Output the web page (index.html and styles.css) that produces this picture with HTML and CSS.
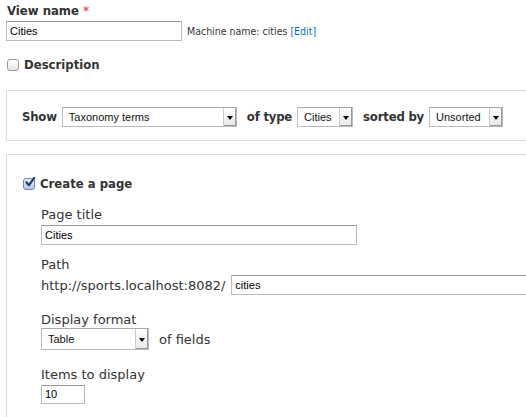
FILE: index.html
```html
<!DOCTYPE html>
<html>
<head>
<meta charset="utf-8">
<link rel="stylesheet" href="styles.css">
</head>
<body>
<div class="page">
  <div class="item">
    <label class="lbl">View name <span class="req">*</span></label>
    <div class="row">
      <input class="txt name" type="text" value="Cities">
      <span class="machine">Machine name: cities <a href="#">[Edit]</a></span>
    </div>
  </div>
  <div class="check desc">
    <span class="cb"></span>
    <span class="cblabel">Description</span>
  </div>

  <div class="box showbox">
    <span class="blabel">Show</span>
    <div class="sel w-tax"><span class="val">Taxonomy terms</span><span class="arr"></span></div>
    <span class="blabel">of type</span>
    <div class="sel w-city"><span class="val">Cities</span><span class="arr"></span></div>
    <span class="blabel">sorted by</span>
    <div class="sel w-sort"><span class="val">Unsorted</span><span class="arr"></span></div>
  </div>

  <div class="box pagebox">
    <div class="check create">
      <span class="cb checked"><svg viewBox="0 0 12 12" width="12" height="12"><path d="M2.3 6.2 L5 9.2 L10.2 1.8" fill="none" stroke="#1d3f7a" stroke-width="2.2" stroke-linecap="round" stroke-linejoin="round"/></svg></span>
      <span class="cblabel">Create a page</span>
    </div>
    <div class="sub">
      <div class="field f-title">
        <div class="flabel">Page title</div>
        <input class="txt ptitle" type="text" value="Cities">
      </div>
      <div class="field f-path">
        <div class="flabel">Path</div>
        <div class="row">
          <span class="prefix">http://sports.localhost:8082/</span>
          <input class="txt path" type="text" value="cities">
        </div>
      </div>
      <div class="field f-format">
        <div class="flabel">Display format</div>
        <div class="row">
          <div class="sel w-table tall"><span class="val">Table</span><span class="arr"></span></div>
          <span class="prefix offields">of fields</span>
        </div>
      </div>
      <div class="field f-items">
        <div class="flabel">Items to display</div>
        <input class="txt items" type="text" value="10">
      </div>
    </div>
  </div>
</div>
</body>
</html>
```

FILE: styles.css
```css
html, body { margin: 0; padding: 0; background: #fff; }
body { font-family: "DejaVu Sans", Verdana, sans-serif; color: #333; overflow: hidden; }
.page { padding: 3px 0 0 6px; }

.lbl, .cblabel, .blabel { font-family: "DejaVu Sans Condensed", "DejaVu Sans", sans-serif; font-weight: bold; font-size: 13px; color: #333; }
.lbl { display: block; line-height: 16px; margin-left: 1px; }
.req { color: #e55; }
.row { display: flex; align-items: center; }
.item .row { margin-top: 2px; }

.txt {
  box-sizing: border-box; font-family: "Liberation Sans", Arial, sans-serif; font-size: 11px;
  color: #000; border: 1px solid #bbb; border-top-color: #999; padding: 0 3px; height: 20px;
  background: #fff; outline: none; margin: 0;
}
.name { width: 176px; }
.machine { font-family: "DejaVu Sans Condensed", "DejaVu Sans", sans-serif; font-size: 10.5px; margin-left: 5px; color: #333; }
.machine a { color: #0074bd; text-decoration: none; }

.check { display: flex; align-items: center; }
.desc { margin-top: 16px; margin-left: 1px; }
.cb {
  box-sizing: border-box; width: 12px; height: 12px; border: 1px solid #999; border-radius: 3px;
  background: linear-gradient(#fff, #e6e6e6); display: inline-flex; align-items: center; justify-content: center;
}
.cb.checked { border-color: #6c86b8; background: linear-gradient(#e8eef9, #b9c8e6); overflow: visible; }
.cb svg { margin-top: -3px; margin-left: 1px; overflow: visible; }
.cblabel { margin-left: 5px; }

.box { border: 1px solid #ddd; border-right: none; margin-right: -10px; }
.showbox { margin-top: 18px; height: 51px; display: flex; align-items: center; padding: 2px 0 0 15px; box-sizing: border-box; }
.blabel { margin-right: 5px; letter-spacing: -0.2px; }
.sel + .blabel { margin-left: 10px; }

.sel {
  box-sizing: border-box; height: 20px; border: 1px solid #bbb; border-top-color: #aaa; background: #fff;
  display: flex; align-items: center; justify-content: space-between; padding-left: 6px;
  font-family: "Liberation Sans", Arial, sans-serif; font-size: 11px; color: #111;
}
.sel .arr {
  width: 12px; height: 18px; border-left: 1px solid #ccc; background: linear-gradient(#fff, #e8e8e8);
  position: relative; box-shadow: inset -1px -1px 0 #999;
}
.sel .arr::after {
  content: ""; position: absolute; left: 3px; top: 8px;
  border-left: 3px solid transparent; border-right: 3px solid transparent; border-top: 4px solid #000;
}
.w-tax { width: 175px; }
.w-city { width: 56px; }
.w-sort { width: 74px; }
.w-table { width: 108px; }
.sel.tall { height: 22px; }
.sel.tall .arr { height: 20px; }
.sel.tall .arr::after { top: 9px; }

.pagebox { margin-top: 13px; padding: 20px 0 40px 16px; }
.create { margin-top: 1px; }
.sub { padding-left: 18px; }
.flabel { font-size: 13px; line-height: 16px; color: #333; }
.f-title { margin-top: 16px; }
.f-title .flabel { margin-bottom: 1px; }
.f-path { margin-top: 12px; }
.f-path .flabel { margin-bottom: 2px; }
.f-format { margin-top: 17px; }
.f-format .flabel { margin-bottom: 0; }
.f-items { margin-top: 17px; }
.f-items .flabel { margin-bottom: 0; }
.ptitle { width: 316px; }
.prefix { font-size: 13px; color: #333; margin-right: 6px; }
.path { width: 320px; flex: none; }
.offields { margin-left: 10px; }
.items { width: 44px; height: 19px; }
```
